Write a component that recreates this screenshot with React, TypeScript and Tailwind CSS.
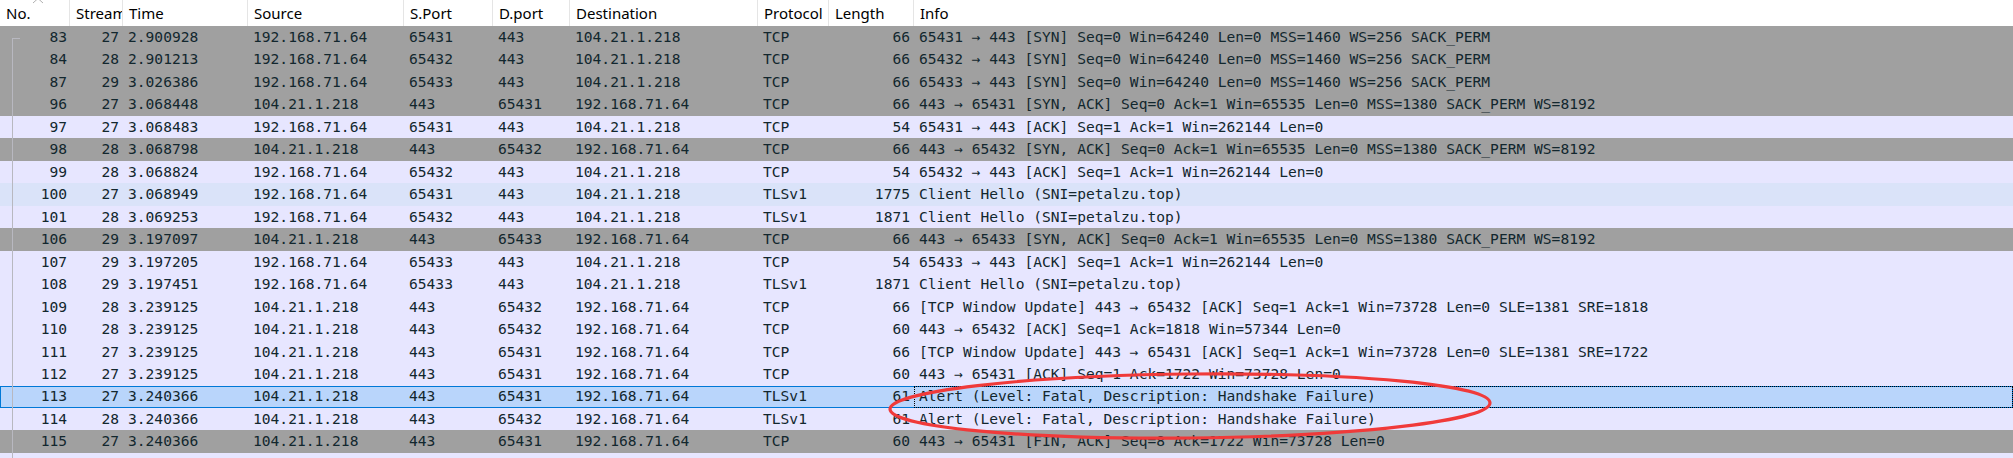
import React from "react";

type Row = {
  no: string;
  stream: string;
  time: string;
  src: string;
  sport: string;
  dport: string;
  dst: string;
  proto: string;
  len: string;
  info: string;
  kind: "gray" | "lav" | "hover" | "sel";
};

const A = "\u2192";

const rows: Row[] = [
  { no: "83", stream: "27", time: "2.900928", src: "192.168.71.64", sport: "65431", dport: "443", dst: "104.21.1.218", proto: "TCP", len: "66", info: `65431 ${A} 443 [SYN] Seq=0 Win=64240 Len=0 MSS=1460 WS=256 SACK_PERM`, kind: "gray" },
  { no: "84", stream: "28", time: "2.901213", src: "192.168.71.64", sport: "65432", dport: "443", dst: "104.21.1.218", proto: "TCP", len: "66", info: `65432 ${A} 443 [SYN] Seq=0 Win=64240 Len=0 MSS=1460 WS=256 SACK_PERM`, kind: "gray" },
  { no: "87", stream: "29", time: "3.026386", src: "192.168.71.64", sport: "65433", dport: "443", dst: "104.21.1.218", proto: "TCP", len: "66", info: `65433 ${A} 443 [SYN] Seq=0 Win=64240 Len=0 MSS=1460 WS=256 SACK_PERM`, kind: "gray" },
  { no: "96", stream: "27", time: "3.068448", src: "104.21.1.218", sport: "443", dport: "65431", dst: "192.168.71.64", proto: "TCP", len: "66", info: `443 ${A} 65431 [SYN, ACK] Seq=0 Ack=1 Win=65535 Len=0 MSS=1380 SACK_PERM WS=8192`, kind: "gray" },
  { no: "97", stream: "27", time: "3.068483", src: "192.168.71.64", sport: "65431", dport: "443", dst: "104.21.1.218", proto: "TCP", len: "54", info: `65431 ${A} 443 [ACK] Seq=1 Ack=1 Win=262144 Len=0`, kind: "lav" },
  { no: "98", stream: "28", time: "3.068798", src: "104.21.1.218", sport: "443", dport: "65432", dst: "192.168.71.64", proto: "TCP", len: "66", info: `443 ${A} 65432 [SYN, ACK] Seq=0 Ack=1 Win=65535 Len=0 MSS=1380 SACK_PERM WS=8192`, kind: "gray" },
  { no: "99", stream: "28", time: "3.068824", src: "192.168.71.64", sport: "65432", dport: "443", dst: "104.21.1.218", proto: "TCP", len: "54", info: `65432 ${A} 443 [ACK] Seq=1 Ack=1 Win=262144 Len=0`, kind: "lav" },
  { no: "100", stream: "27", time: "3.068949", src: "192.168.71.64", sport: "65431", dport: "443", dst: "104.21.1.218", proto: "TLSv1", len: "1775", info: "Client Hello (SNI=petalzu.top)", kind: "hover" },
  { no: "101", stream: "28", time: "3.069253", src: "192.168.71.64", sport: "65432", dport: "443", dst: "104.21.1.218", proto: "TLSv1", len: "1871", info: "Client Hello (SNI=petalzu.top)", kind: "lav" },
  { no: "106", stream: "29", time: "3.197097", src: "104.21.1.218", sport: "443", dport: "65433", dst: "192.168.71.64", proto: "TCP", len: "66", info: `443 ${A} 65433 [SYN, ACK] Seq=0 Ack=1 Win=65535 Len=0 MSS=1380 SACK_PERM WS=8192`, kind: "gray" },
  { no: "107", stream: "29", time: "3.197205", src: "192.168.71.64", sport: "65433", dport: "443", dst: "104.21.1.218", proto: "TCP", len: "54", info: `65433 ${A} 443 [ACK] Seq=1 Ack=1 Win=262144 Len=0`, kind: "lav" },
  { no: "108", stream: "29", time: "3.197451", src: "192.168.71.64", sport: "65433", dport: "443", dst: "104.21.1.218", proto: "TLSv1", len: "1871", info: "Client Hello (SNI=petalzu.top)", kind: "lav" },
  { no: "109", stream: "28", time: "3.239125", src: "104.21.1.218", sport: "443", dport: "65432", dst: "192.168.71.64", proto: "TCP", len: "66", info: `[TCP Window Update] 443 ${A} 65432 [ACK] Seq=1 Ack=1 Win=73728 Len=0 SLE=1381 SRE=1818`, kind: "lav" },
  { no: "110", stream: "28", time: "3.239125", src: "104.21.1.218", sport: "443", dport: "65432", dst: "192.168.71.64", proto: "TCP", len: "60", info: `443 ${A} 65432 [ACK] Seq=1 Ack=1818 Win=57344 Len=0`, kind: "lav" },
  { no: "111", stream: "27", time: "3.239125", src: "104.21.1.218", sport: "443", dport: "65431", dst: "192.168.71.64", proto: "TCP", len: "66", info: `[TCP Window Update] 443 ${A} 65431 [ACK] Seq=1 Ack=1 Win=73728 Len=0 SLE=1381 SRE=1722`, kind: "lav" },
  { no: "112", stream: "27", time: "3.239125", src: "104.21.1.218", sport: "443", dport: "65431", dst: "192.168.71.64", proto: "TCP", len: "60", info: `443 ${A} 65431 [ACK] Seq=1 Ack=1722 Win=73728 Len=0`, kind: "lav" },
  { no: "113", stream: "27", time: "3.240366", src: "104.21.1.218", sport: "443", dport: "65431", dst: "192.168.71.64", proto: "TLSv1", len: "61", info: "Alert (Level: Fatal, Description: Handshake Failure)", kind: "sel" },
  { no: "114", stream: "28", time: "3.240366", src: "104.21.1.218", sport: "443", dport: "65432", dst: "192.168.71.64", proto: "TLSv1", len: "61", info: "Alert (Level: Fatal, Description: Handshake Failure)", kind: "lav" },
  { no: "115", stream: "27", time: "3.240366", src: "104.21.1.218", sport: "443", dport: "65431", dst: "192.168.71.64", proto: "TCP", len: "60", info: `443 ${A} 65431 [FIN, ACK] Seq=8 Ack=1722 Win=73728 Len=0`, kind: "gray" },
];

const GRID =
  "grid grid-cols-[70px_53px_125px_156px_89px_77px_188px_71px_85px_1fr]";

const headers = [
  "No.",
  "Stream",
  "Time",
  "Source",
  "S.Port",
  "D.port",
  "Destination",
  "Protocol",
  "Length",
  "Info",
];

function rowBg(kind: Row["kind"]) {
  if (kind === "gray") return "bg-[#a0a0a0]";
  if (kind === "hover") return "bg-[#dae3f9]";
  if (kind === "sel") return "bg-[#b9d5fb]";
  return "bg-[#e7e6ff]";
}

function Cell({
  children,
  right,
  className = "",
}: {
  children?: React.ReactNode;
  right?: boolean;
  className?: string;
}) {
  return (
    <div
      className={`h-full flex items-center overflow-hidden whitespace-nowrap ${
        right ? "justify-end pr-[3px]" : "pl-[5px]"
      } ${className}`}
    >
      {children}
    </div>
  );
}

export default function App() {
  return (
    <div className="relative w-[2013px] h-[458px] overflow-hidden bg-white">
      {/* header */}
      <div
        className={`${GRID} h-[26px] bg-white text-[15px] text-black font-['Noto_Sans',sans-serif]`}
      >
        {headers.map((h, i) => (
          <div
            key={h}
            className={`h-full flex items-center overflow-hidden whitespace-nowrap pl-[6px] ${
              i < headers.length - 1 ? "border-r border-[#e5e5e5]" : ""
            }`}
          >
            {h}
          </div>
        ))}
      </div>

      {/* rows */}
      <div className="flex flex-col text-[14.6px] leading-none text-[#12272e] font-['DejaVu_Sans_Mono',monospace]">
        {rows.map((r) => (
          <div
            key={r.no}
            className={`relative ${GRID} h-[22.47px] ${rowBg(r.kind)}`}
          >
            {r.kind === "sel" && (
              <span className="absolute inset-0 border border-[#0078d7] pointer-events-none" />
            )}
            <Cell right>{r.no}</Cell>
            <Cell right className="!pr-[4px]">
              {r.stream}
            </Cell>
            <Cell>{r.time}</Cell>
            <Cell>{r.src}</Cell>
            <Cell>{r.sport}</Cell>
            <Cell>{r.dport}</Cell>
            <Cell>{r.dst}</Cell>
            <Cell>{r.proto}</Cell>
            <Cell right className="!pr-[4px]">
              {r.len}
            </Cell>
            <div className="relative h-full flex items-center overflow-hidden whitespace-nowrap pl-[5px]">
              {r.kind === "sel" && (
                <span className="absolute inset-0 border border-dotted border-black" />
              )}
              {r.info}
            </div>
          </div>
        ))}
        <div className="h-[22.47px] bg-[#e7e6ff]" />
      </div>

      {/* sort indicator */}
      <svg
        className="absolute left-[32px] top-[-3px]"
        width="12"
        height="7"
        viewBox="0 0 12 7"
      >
        <path d="M1 6 L6 1.5 L11 6" fill="none" stroke="#b0b0b0" strokeWidth="1" />
      </svg>

      {/* related packets line */}
      <div className="absolute left-[12px] top-[38px] w-[8px] h-[1px] bg-[#b8b8c0]" />
      <div className="absolute left-[12px] top-[38px] bottom-0 w-[1px] bg-[#b8b8c0]" />

      {/* red annotation ellipse */}
      <svg
        className="absolute left-0 top-0 pointer-events-none"
        width="2013"
        height="458"
        viewBox="0 0 2013 458"
      >
        <ellipse
          cx="1190"
          cy="406"
          rx="300"
          ry="32"
          fill="none"
          stroke="#f03a3a"
          strokeWidth="3.2"
          transform="rotate(-0.6 1190 406)"
        />
      </svg>
    </div>
  );
}
